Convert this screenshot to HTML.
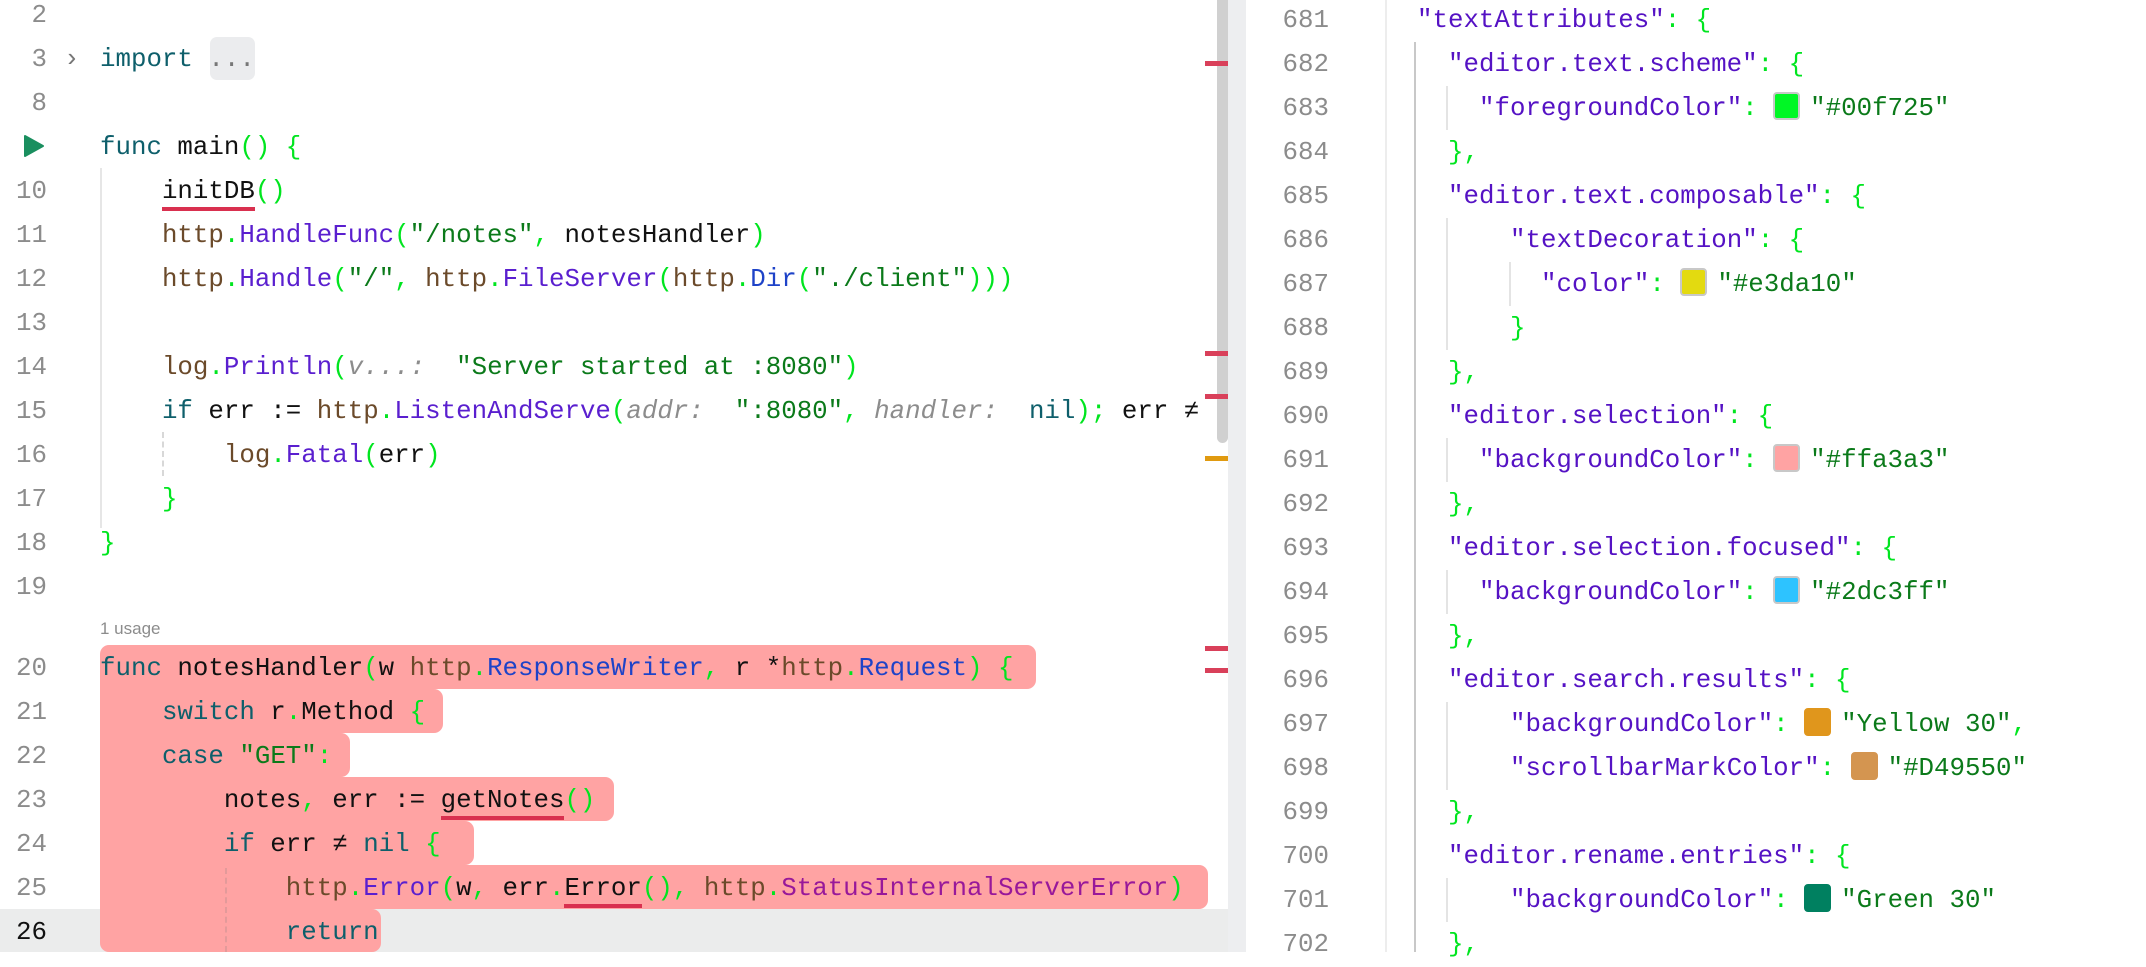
<!DOCTYPE html>
<html><head><meta charset="utf-8"><style>
*{margin:0;padding:0;box-sizing:border-box}
body{width:2146px;height:952px;overflow:hidden;background:#fff;position:relative;font-family:"Liberation Mono",monospace;font-size:25.8px}
.r{position:absolute;height:44px;line-height:44px;white-space:pre;transform:translateY(2px)}
.ln{position:absolute;height:44px;line-height:44px;text-align:right;color:#8c8c8c;width:47px;left:0;transform:translateY(2px)}
.rn{position:absolute;height:44px;line-height:44px;text-align:right;color:#8c8c8c;width:100px;left:1229px;transform:translateY(2px)}
.k{color:#0e5f6b}.p{color:#6b4a2a}.f{color:#5a1fcf}.t{color:#1e43c8}.s{color:#0b7a1a}.b{color:#00e51f}.h{color:#8c8c8c;font-style:italic}.c{color:#98189a}.j{color:#5512c4}.x{color:#111}
.u{border-bottom:4px solid #d9304f;padding-bottom:1px}
.pk{position:absolute;background:#ffa3a3;border-radius:0 9px 9px 0;height:44px}
.sw{display:inline-block;width:27px;height:28px;border-radius:4px;border:2px solid #c8c8c8;vertical-align:-5px;margin-right:10px}
.m{position:absolute;left:1205px;width:23px;height:5px;background:#d9405a}
</style></head><body>
<div style="position:absolute;left:0;top:909px;width:1228px;height:43px;background:#ebecec"></div>
<div class="pk" style="left:100px;top:645px;width:936px;border-radius:9px 9px 9px 0"></div>
<div class="pk" style="left:100px;top:689px;width:343px"></div>
<div class="pk" style="left:100px;top:733px;width:250px"></div>
<div class="pk" style="left:100px;top:777px;width:514px"></div>
<div class="pk" style="left:100px;top:821px;width:374px"></div>
<div class="pk" style="left:100px;top:865px;width:1108px"></div>
<div class="pk" style="left:100px;top:909px;width:281px;height:43px;border-radius:0 9px 9px 9px"></div>
<div style="position:absolute;left:100px;top:168px;width:2px;height:360px;background:#e6e6e6"></div>
<div style="position:absolute;left:162px;top:432px;width:0;height:44px;border-left:2px dashed #d8d8d8"></div>
<div style="position:absolute;left:225px;top:868px;width:0;height:84px;border-left:2px dashed #e39a9a"></div>

<div style="position:absolute;left:0;top:0;width:1205px;height:952px;overflow:hidden">
<div class="ln" style="top:-8px">2</div>
<div class="ln" style="top:36px">3</div>
<div class="r" style="top:36px;left:64px;color:#777">›</div>
<div style="position:absolute;left:210px;top:37px;width:45px;height:43px;background:#ebecee;border-radius:7px"></div>
<div class="r" style="top:36px;left:100px"><span class="k">import</span> <span style="color:#777">...</span></div>
<div class="ln" style="top:80px">8</div>
<svg style="position:absolute;left:23px;top:134px" width="22" height="24"><path d="M2 2 L20 12 L2 22 Z" fill="#1a8f5f" stroke="#1a8f5f" stroke-width="2" stroke-linejoin="round"/></svg>
<div class="r x" style="top:124px;left:100px"><span class="k">func</span> main<span class="b">()</span> <span class="b">{</span></div>
<div class="ln" style="top:168px">10</div>
<div class="r x" style="top:168px;left:100px">    <span class="u">initDB</span><span class="b">()</span></div>
<div class="ln" style="top:212px">11</div>
<div class="r x" style="top:212px;left:100px">    <span class="p">http</span><span class="b">.</span><span class="f">HandleFunc</span><span class="b">(</span><span class="s">"/notes"</span><span class="b">,</span> notesHandler<span class="b">)</span></div>
<div class="ln" style="top:256px">12</div>
<div class="r x" style="top:256px;left:100px">    <span class="p">http</span><span class="b">.</span><span class="f">Handle</span><span class="b">(</span><span class="s">"/"</span><span class="b">,</span> <span class="p">http</span><span class="b">.</span><span class="f">FileServer</span><span class="b">(</span><span class="p">http</span><span class="b">.</span><span class="t">Dir</span><span class="b">(</span><span class="s">"./client"</span><span class="b">)))</span></div>
<div class="ln" style="top:300px">13</div>
<div class="ln" style="top:344px">14</div>
<div class="r x" style="top:344px;left:100px">    <span class="p">log</span><span class="b">.</span><span class="f">Println</span><span class="b">(</span><span class="h">v...:</span>  <span class="s">"Server started at :8080"</span><span class="b">)</span></div>
<div class="ln" style="top:388px">15</div>
<div class="r x" style="top:388px;left:100px">    <span class="k">if</span> err := <span class="p">http</span><span class="b">.</span><span class="f">ListenAndServe</span><span class="b">(</span><span class="h">addr:</span>  <span class="s">":8080"</span><span class="b">,</span> <span class="h">handler:</span>  <span class="k">nil</span><span class="b">);</span> err ≠ <span class="k">nil</span> <span class="b">{</span></div>
<div class="ln" style="top:432px">16</div>
<div class="r x" style="top:432px;left:100px">        <span class="p">log</span><span class="b">.</span><span class="f">Fatal</span><span class="b">(</span>err<span class="b">)</span></div>
<div class="ln" style="top:476px">17</div>
<div class="r x" style="top:476px;left:100px">    <span class="b">}</span></div>
<div class="ln" style="top:520px">18</div>
<div class="r x" style="top:520px;left:100px"><span class="b">}</span></div>
<div class="ln" style="top:564px">19</div>
<div style="position:absolute;left:100px;top:619px;font-family:'Liberation Sans',sans-serif;font-size:17px;color:#8c8c8c">1 usage</div>
<div class="ln" style="top:645px">20</div>
<div class="r x" style="top:645px;left:100px"><span class="k">func</span> notesHandler<span class="b">(</span>w <span class="p">http</span><span class="b">.</span><span class="t">ResponseWriter</span><span class="b">,</span> r *<span class="p">http</span><span class="b">.</span><span class="t">Request</span><span class="b">)</span> <span class="b">{</span></div>
<div class="ln" style="top:689px">21</div>
<div class="r x" style="top:689px;left:100px">    <span class="k">switch</span> r<span class="b">.</span>Method <span class="b">{</span></div>
<div class="ln" style="top:733px">22</div>
<div class="r x" style="top:733px;left:100px">    <span class="k">case</span> <span class="s">"GET"</span><span class="b">:</span></div>
<div class="ln" style="top:777px">23</div>
<div class="r x" style="top:777px;left:100px">        notes<span class="b">,</span> err := <span class="u">getNotes</span><span class="b">()</span></div>
<div class="ln" style="top:821px">24</div>
<div class="r x" style="top:821px;left:100px">        <span class="k">if</span> err ≠ <span class="k">nil</span> <span class="b">{</span></div>
<div class="ln" style="top:865px">25</div>
<div class="r x" style="top:865px;left:100px">            <span class="p">http</span><span class="b">.</span><span class="f">Error</span><span class="b">(</span>w<span class="b">,</span> err<span class="b">.</span><span class="u">Error</span><span class="b">(),</span> <span class="p">http</span><span class="b">.</span><span class="c">StatusInternalServerError</span><span class="b">)</span></div>
<div class="ln" style="top:909px;color:#111">26</div>
<div class="r x" style="top:909px;left:100px">            <span class="k">return</span></div>
</div>

<div style="position:absolute;left:1217px;top:0;width:11px;height:443px;background:#d0d0d0;border-radius:0 0 6px 6px"></div>
<div class="m" style="top:61px"></div>
<div class="m" style="top:351px"></div>
<div class="m" style="top:394px"></div>
<div class="m" style="top:456px;background:#e09a10"></div>
<div class="m" style="top:646px"></div>
<div class="m" style="top:668px"></div>
<div style="position:absolute;left:1228px;top:0;width:18px;height:952px;background:#edeef0"></div>

<div style="position:absolute;left:1385px;top:0;width:2px;height:952px;background:#ededed"></div>
<div style="position:absolute;left:1414px;top:42px;width:2px;height:910px;background:#c8c8c8"></div>
<div style="position:absolute;left:1446px;top:86px;width:2px;height:44px;background:#e4e4e4"></div>
<div style="position:absolute;left:1446px;top:218px;width:2px;height:132px;background:#e4e4e4"></div>
<div style="position:absolute;left:1509px;top:262px;width:2px;height:44px;background:#e4e4e4"></div>
<div style="position:absolute;left:1446px;top:438px;width:2px;height:44px;background:#e4e4e4"></div>
<div style="position:absolute;left:1446px;top:570px;width:2px;height:44px;background:#e4e4e4"></div>
<div style="position:absolute;left:1446px;top:702px;width:2px;height:88px;background:#e4e4e4"></div>
<div style="position:absolute;left:1446px;top:878px;width:2px;height:44px;background:#e4e4e4"></div>

<div class="rn" style="top:-3px">681</div><div class="r" style="top:-3px;left:1417px"><span class="j">"textAttributes"</span><span class="b">:</span> <span class="b">{</span></div>
<div class="rn" style="top:41px">682</div><div class="r" style="top:41px;left:1448px"><span class="j">"editor.text.scheme"</span><span class="b">:</span> <span class="b">{</span></div>
<div class="rn" style="top:85px">683</div><div class="r" style="top:85px;left:1479px"><span class="j">"foregroundColor"</span><span class="b">:</span> <span class="sw" style="background:#00f725"></span><span class="s">"#00f725"</span></div>
<div class="rn" style="top:129px">684</div><div class="r" style="top:129px;left:1448px"><span class="b">},</span></div>
<div class="rn" style="top:173px">685</div><div class="r" style="top:173px;left:1448px"><span class="j">"editor.text.composable"</span><span class="b">:</span> <span class="b">{</span></div>
<div class="rn" style="top:217px">686</div><div class="r" style="top:217px;left:1510px"><span class="j">"textDecoration"</span><span class="b">:</span> <span class="b">{</span></div>
<div class="rn" style="top:261px">687</div><div class="r" style="top:261px;left:1541px"><span class="j">"color"</span><span class="b">:</span> <span class="sw" style="background:#e3da10"></span><span class="s">"#e3da10"</span></div>
<div class="rn" style="top:305px">688</div><div class="r" style="top:305px;left:1510px"><span class="b">}</span></div>
<div class="rn" style="top:349px">689</div><div class="r" style="top:349px;left:1448px"><span class="b">},</span></div>
<div class="rn" style="top:393px">690</div><div class="r" style="top:393px;left:1448px"><span class="j">"editor.selection"</span><span class="b">:</span> <span class="b">{</span></div>
<div class="rn" style="top:437px">691</div><div class="r" style="top:437px;left:1479px"><span class="j">"backgroundColor"</span><span class="b">:</span> <span class="sw" style="background:#ffa3a3"></span><span class="s">"#ffa3a3"</span></div>
<div class="rn" style="top:481px">692</div><div class="r" style="top:481px;left:1448px"><span class="b">},</span></div>
<div class="rn" style="top:525px">693</div><div class="r" style="top:525px;left:1448px"><span class="j">"editor.selection.focused"</span><span class="b">:</span> <span class="b">{</span></div>
<div class="rn" style="top:569px">694</div><div class="r" style="top:569px;left:1479px"><span class="j">"backgroundColor"</span><span class="b">:</span> <span class="sw" style="background:#2dc3ff"></span><span class="s">"#2dc3ff"</span></div>
<div class="rn" style="top:613px">695</div><div class="r" style="top:613px;left:1448px"><span class="b">},</span></div>
<div class="rn" style="top:657px">696</div><div class="r" style="top:657px;left:1448px"><span class="j">"editor.search.results"</span><span class="b">:</span> <span class="b">{</span></div>
<div class="rn" style="top:701px">697</div><div class="r" style="top:701px;left:1510px"><span class="j">"backgroundColor"</span><span class="b">:</span> <span class="sw" style="background:#e0961c;border-color:#e0961c"></span><span class="s">"Yellow 30"</span><span class="b">,</span></div>
<div class="rn" style="top:745px">698</div><div class="r" style="top:745px;left:1510px"><span class="j">"scrollbarMarkColor"</span><span class="b">:</span> <span class="sw" style="background:#d49550;border-color:#d49550"></span><span class="s">"#D49550"</span></div>
<div class="rn" style="top:789px">699</div><div class="r" style="top:789px;left:1448px"><span class="b">},</span></div>
<div class="rn" style="top:833px">700</div><div class="r" style="top:833px;left:1448px"><span class="j">"editor.rename.entries"</span><span class="b">:</span> <span class="b">{</span></div>
<div class="rn" style="top:877px">701</div><div class="r" style="top:877px;left:1510px"><span class="j">"backgroundColor"</span><span class="b">:</span> <span class="sw" style="background:#008060;border-color:#008060"></span><span class="s">"Green 30"</span></div>
<div class="rn" style="top:921px">702</div><div class="r" style="top:921px;left:1448px"><span class="b">},</span></div>
</body></html>
